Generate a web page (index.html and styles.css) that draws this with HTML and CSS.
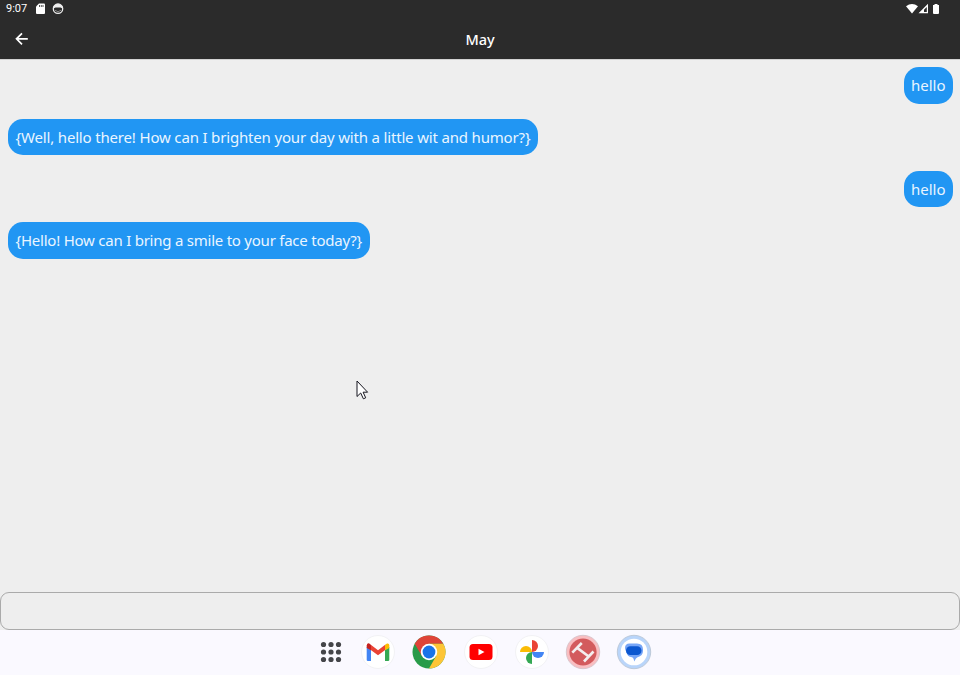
FILE: index.html
```html
<!DOCTYPE html>
<html lang="en">
<head>
<meta charset="utf-8">
<title>May</title>
<link rel="stylesheet" href="styles.css">
</head>
<body>
<header class="top">
  <div class="status">
    <span class="time">9:07</span>
    <svg class="sd" width="9" height="12" viewBox="0 0 9 12"><path fill="#fff" d="M3 .5h5q1 0 1 1V10q0 1-1 1H1q-1 0-1-1V3.5z"/><path stroke="#555" d="M3.5 2v2M5.3 2v2M7 2v2"/></svg>
    <svg class="face" width="12" height="12" viewBox="0 0 12 12"><circle cx="6" cy="5.700" r="4.700" fill="none" stroke="#eee" stroke-width="1.300"/><path fill="#eee" d="M1.500 2.900Q6-.8 10.500 2.900V5.500L8.500 4.400h-5L1.500 5.500z"/><path d="M3 7.300q3 2.800 6 0" fill="none" stroke="#888"/></svg>
    <svg class="signals" width="34" height="12" viewBox="0 0 34 12"><path fill="#fff" d="M0 3.300Q6-1.300 12 3.300L6 10.500z"/><path fill="#fff" fill-rule="evenodd" d="M22 .8V10.300H12.500zM20.800 4v5H18V6.800z"/><path fill="#fff" d="M28.500 1h3v1H33v8q0 1-1 1h-4q-1 0-1-1V2h1.500z"/></svg>
  </div>
  <div class="appbar">
    <svg class="back" width="14" height="14" viewBox="0 0 14 14"><path d="M7 1.300 1.500 6.800 7 12.300M1.800 6.800h11" fill="none" stroke="#fff" stroke-width="1.700"/></svg>
    <h1 class="title">May</h1>
  </div>
</header>
<main class="chat">
  <div class="bubble mine"><span class="hello">hello</span></div>
  <div class="bubble"><span class="first">{Well, hello there! How can I brighten your day with a little wit and humor?}</span></div>
  <div class="bubble mine"><span class="hello">hello</span></div>
  <div class="bubble"><span class="second">{Hello! How can I bring a smile to your face today?}</span></div>
</main>
<div class="entry"></div>
<nav class="dock">
  <svg width="36" height="36" viewBox="0 0 36 36"><g fill="#444549"><circle cx="10.500" cy="10.500" r="2.600"/><circle cx="18" cy="10.500" r="2.600"/><circle cx="25.500" cy="10.500" r="2.600"/><circle cx="10.500" cy="18" r="2.600"/><circle cx="18" cy="18" r="2.600"/><circle cx="25.500" cy="18" r="2.600"/><circle cx="10.500" cy="25.500" r="2.600"/><circle cx="18" cy="25.500" r="2.600"/><circle cx="25.500" cy="25.500" r="2.600"/></g></svg>
  <svg class="gmail" width="36" height="36" viewBox="0 0 36 36"><circle cx="18" cy="18" r="16.500" fill="#fff" stroke="#f2f2f5"/><path fill="#4285f4" d="M6.700 13l4.300 3v11H8q-1.300 0-1.300-1z"/><path fill="#34a853" d="M25 16l4.300-3v13q0 1-1.300 1h-3z"/><path fill="#ea4335" d="M10.500 10.500l7.500 5.700 7.500-5.700v5.200L18 21.300l-7.500-5.600z"/><path fill="#c5221f" d="M6.700 14v-2.500Q7 9 9 9.300L11 11v5.200z"/><path fill="#fbbc04" d="M25 16.200V11l2-1.500q2.300-.5 2.300 2V14z"/></svg>
  <svg width="36" height="36" viewBox="0 0 36 36"><circle cx="18" cy="18" r="16.500" fill="#289b49"/><path fill="#df4438" d="M3.700 9.750A16.500 16.500 0 0 1 32.300 9.750H18L10.850 22.100z"/><path fill="#fdc536" d="M32.300 9.750A16.500 16.500 0 0 1 18 34.500L25.150 22.100 18 9.750z"/><circle cx="18" cy="18" r="8.250" fill="#fff"/><circle cx="18" cy="18" r="6.400" fill="#1a73e8"/></svg>
  <svg width="36" height="36" viewBox="0 0 36 36"><circle cx="18" cy="18" r="16.500" fill="#fff" stroke="#f2f2f5"/><rect x="6.500" y="10" width="23" height="16" rx="3.500" fill="#f00"/><path fill="#fff" d="M15.500 14.700v6.600l6-3.300z"/></svg>
  <svg width="36" height="36" viewBox="0 0 36 36"><circle cx="18" cy="18" r="16.500" fill="#fff" stroke="#f2f2f5"/><path fill="#ea4335" d="M18 6a6 6 0 0 1 0 12z"/><path fill="#fbbc04" d="M6 18a6 6 0 0 1 12 0z"/><path fill="#4285f4" d="M18 18h12a6 6 0 0 1-12 0z"/><path fill="#34a853" d="M18 18v12a6 6 0 0 1 0-12z"/></svg>
  <svg width="36" height="36" viewBox="0 0 36 36"><circle cx="18" cy="18" r="16.700" fill="#f9bec1" stroke="#d9c6cc"/><circle cx="18" cy="18" r="13.600" fill="#d35b5d"/><path d="M7.300 18.700l9.500-9.700M19 27.500l9.500-10M12.200 13.900l11.500 8.600" fill="none" stroke="#f4eeee" stroke-width="2.600"/></svg>
  <svg width="36" height="36" viewBox="0 0 36 36"><circle cx="18" cy="18" r="16.700" fill="#b9d5fa" stroke="#becad9"/><circle cx="18" cy="18" r="13.300" fill="#fff"/><path fill="#77a6f7" d="M13.500 9.500h7.500q6 0 6 6v1.500q0 5-5.500 6.200-1.500.4-3.300 4.300-.5-3.800-2.200-4.200-5-.5-5.500-5.300Q9 16.500 9 14q0-4.500 4.500-4.500z"/><rect x="10" y="12.300" width="15.500" height="8.700" rx="4.350" fill="#0b57d0"/></svg>
</nav>
<svg class="cursor" width="13" height="21" viewBox="0 0 13 21"><path fill="#fff" stroke="#15151f" d="M1 1v15.500l3.700-3.500 2.700 5.800 2.300-1-2.600-5.600h4.500z"/></svg>
</body>
</html>
```
FILE: styles.css
```css
* { box-sizing: border-box; }
body {
  margin: 0;
  height: 675px;
  display: flex;
  flex-direction: column;
  overflow: hidden;
  background: #eee;
  font-family: "Noto Sans", "Open Sans", sans-serif;
}
svg { display: block; flex: none; }
.top { height: 59px; background: #2b2b2b; color: #fff; flex: none; }
.status { height: 18px; display: flex; align-items: center; padding: 0 20px 0 6px; }
.time { font: 11px/18px Roboto, sans-serif; width: 30px; }
.face { margin-left: 7px; }
.signals { margin-left: auto; }
.appbar { height: 41px; display: grid; grid-template-columns: 14px 1fr 14px; align-items: center; padding: 0 15px; }
.title { margin: 0; text-align: center; font-size: 14.5px; line-height: 20px; font-weight: 500; letter-spacing: -.1px; }
.chat {
  flex: 1;
  display: flex;
  flex-direction: column;
  align-items: flex-start;
  gap: 15.3px;
  padding: 7.4px 7px 0 8px;
  border-top: 1px solid #d2d2d2;
}
.bubble {
  height: 36.4px;
  padding: 0 7.5px;
  border-radius: 15px;
  background: #2196f3;
  color: #eaf5ff;
  font-size: 15px;
  line-height: 36px;
  white-space: nowrap;
}
.mine { align-self: flex-end; }
.bubble span { display: block; }
.first { width: 515px; letter-spacing: -.17px; }
.second { width: 347px; letter-spacing: -.235px; }
.hello { width: 34.5px; }
.entry { height: 38px; border: 1px solid #aaa; border-radius: 9px; flex: none; background: #eee; }
.dock { height: 45px; flex: none; display: flex; justify-content: center; align-items: center; gap: 15.3px; background: #faf9ff; padding: 0 0 2px 5px; }
.dock .gmail { margin-left: -4px; }
.cursor { position: absolute; left: 355.500px; top: 379.500px; }
```
